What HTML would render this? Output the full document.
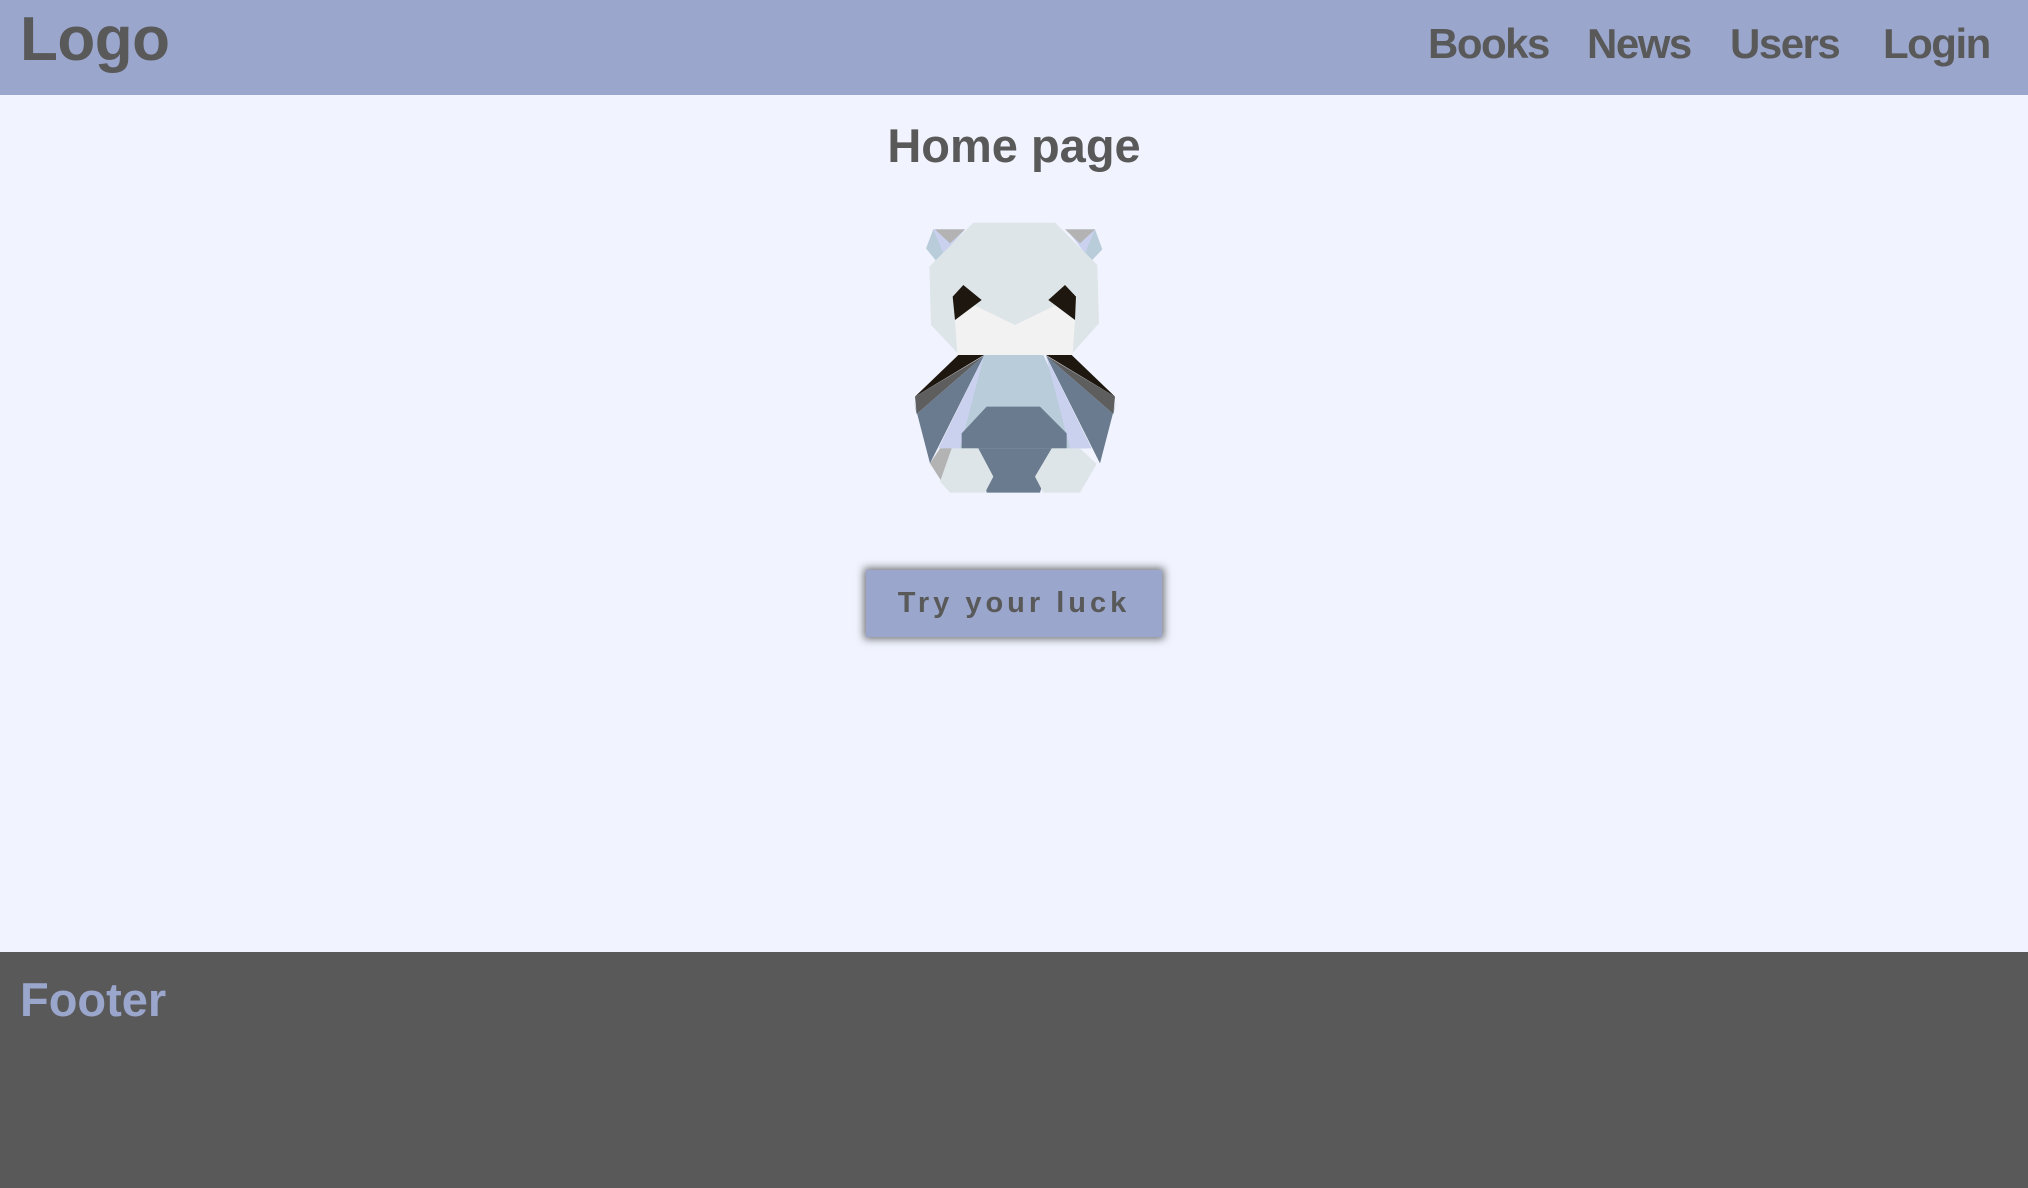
<!DOCTYPE html>
<html><head><meta charset="utf-8"><style>
html,body{margin:0;padding:0;width:2028px;height:1188px;overflow:hidden;background:#f1f4fe;font-family:"Liberation Sans",sans-serif;font-weight:bold;color:#595959}
.hdr{position:absolute;left:0;top:0;width:2028px;height:95px;background:#9ba6cc}
.logo{position:absolute;left:20px;top:4px;font-size:62px;letter-spacing:-0.5px}
.nav{position:absolute;top:20px;font-size:42px;letter-spacing:-1.5px}
h1{position:absolute;left:0;width:2028px;top:118px;margin:0;text-align:center;font-size:47px;letter-spacing:0px}
.btn{position:absolute;left:866px;top:570px;width:296px;height:67px;background:#9ba6cc;box-shadow:0 0 8px 2px rgba(0,0,0,.55);text-align:center;line-height:67px;font-size:29px;letter-spacing:4px}
.ftr{position:absolute;left:0;top:952px;width:2028px;height:236px;background:#595959}
.ftxt{position:absolute;left:20px;top:972px;font-size:47px;color:#9ba6cc;letter-spacing:0px}
</style></head><body>
<div class="hdr"></div>
<div class="logo">Logo</div>
<div class="nav" style="left:1428px">Books</div>
<div class="nav" style="left:1587px">News</div>
<div class="nav" style="left:1730px">Users</div>
<div class="nav" style="left:1883px">Login</div>
<h1>Home page</h1>
<svg style="position:absolute;left:900px;top:210px" width="230" height="290" viewBox="0 0 690 870">
<polygon fill="#b9ccd9" points="100,58 78,115 110,155 195,58"/>
<polygon fill="#c9d1ef" points="100,58 130,130 195,58"/>
<polygon fill="#b3b3b3" points="105,58 195,58 150,100"/>
<polygon fill="#b9ccd9" points="500,58 585,58 607,118 575,152"/>
<polygon fill="#c9d1ef" points="500,58 585,58 555,130"/>
<polygon fill="#b3b3b3" points="495,58 585,58 540,100"/>
<polygon fill="#dde5e8" points="220,38 465,38 592,165 597,340 515,432 175,432 93,345 88,170"/>
<polygon fill="#f2f2f2" points="160,255 345,345 530,255 518,435 172,435"/>
<polygon fill="#1e1710" points="158,260 190,225 245,270 165,330"/>
<polygon fill="#1e1710" points="445,270 495,225 528,260 525,330"/>
<polygon fill="#b9ccd9" points="250,435 430,435 560,715 130,715"/>
<polygon fill="#1e1710" points="175,435 252,435 45,560"/>
<polygon fill="#5e5e5e" points="45,560 252,437 50,612"/>
<polygon fill="#6a7b8f" points="50,612 252,437 90,760 42,575"/>
<polygon fill="#c9d1ef" points="252,437 115,715 180,715"/>
<polygon fill="#1e1710" points="515,435 438,435 645,560"/>
<polygon fill="#5e5e5e" points="645,560 438,437 640,612"/>
<polygon fill="#6a7b8f" points="640,612 438,437 600,760 648,575"/>
<polygon fill="#c9d1ef" points="438,437 575,715 510,715"/>
<polygon fill="#6a7b8f" points="260,590 420,590 500,670 500,715 185,715 185,670"/>
<polygon fill="#6a7b8f" points="230,715 460,715 420,848 260,848"/>
<polygon fill="#b3b3b3" points="90,760 120,715 158,715 125,815"/>
<polygon fill="#dde5e8" points="155,715 235,715 280,800 255,848 150,848 120,815"/>
<polygon fill="#dde5e8" points="455,715 540,715 590,762 540,848 430,848 405,800"/>
</svg>
<div class="btn">Try your luck</div>
<div class="ftr"></div>
<div class="ftxt">Footer</div>
</body></html>
